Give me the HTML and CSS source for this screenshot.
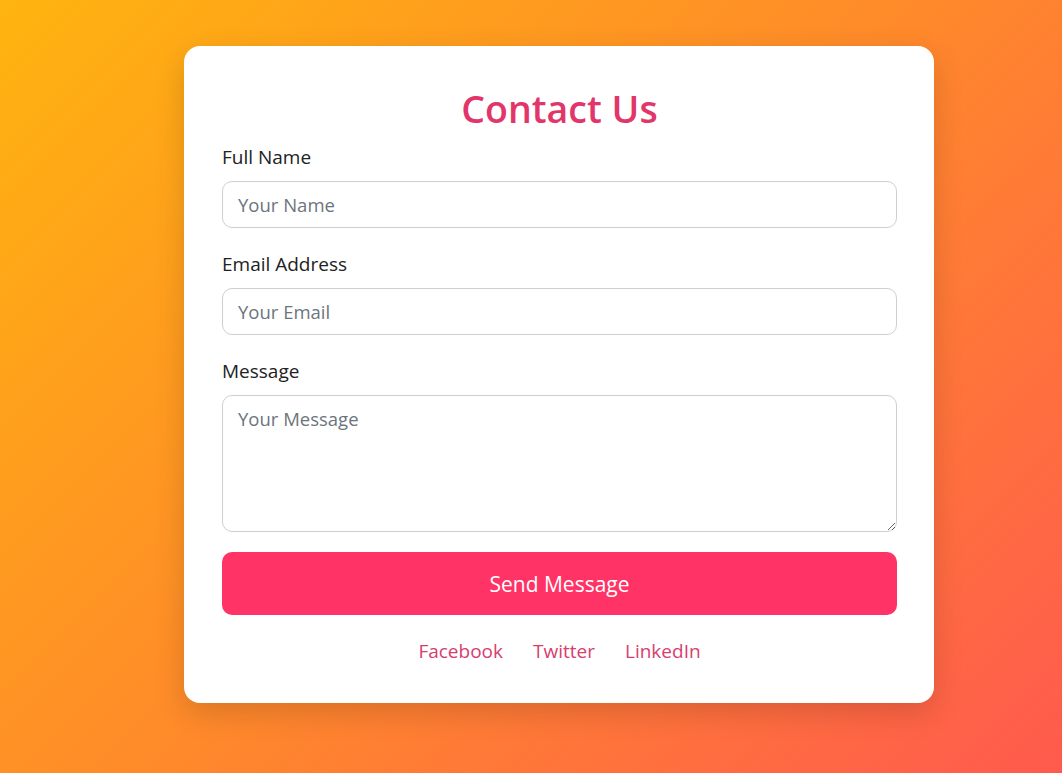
FILE: index.html
```html
<!DOCTYPE html>
<html lang="en">
<head>
<meta charset="utf-8">
<title>Contact Us</title>
<link rel="stylesheet" href="styles.css">
</head>
<body>
<main class="page">
  <section class="card">
    <h1 class="title">Contact Us</h1>
    <form class="form">
      <div class="field">
        <label class="label" for="name">Full Name</label>
        <input class="input" id="name" type="text" placeholder="Your Name">
      </div>
      <div class="field">
        <label class="label" for="email">Email Address</label>
        <input class="input" id="email" type="email" placeholder="Your Email">
      </div>
      <div class="field field-last">
        <label class="label" for="msg">Message</label>
        <textarea class="input textarea" id="msg" placeholder="Your Message"></textarea>
      </div>
      <button class="button" type="button">Send Message</button>
    </form>
    <nav class="social">
      <a class="social-link" href="#">Facebook</a>
      <a class="social-link" href="#">Twitter</a>
      <a class="social-link" href="#">LinkedIn</a>
    </nav>
  </section>
</main>
</body>
</html>
```
FILE: styles.css
```css
* { box-sizing: border-box; }
html, body { margin: 0; padding: 0; }
body {
  min-height: 100vh;
  background: linear-gradient(135deg, #ffb40f 0%, #ff8a2a 50%, #ff5a4e 100%);
  font-family: "Open Sans", "Noto Sans", sans-serif;
  color: #212529;
}
.page {
  display: flex;
  justify-content: center;
  padding-top: 46px;
  padding-left: 56px;
  min-height: 773px;
}
.card {
  width: 750px;
  height: 657px;
  background: #fff;
  border-radius: 16px;
  box-shadow: 0 10px 30px rgba(0,0,0,0.15);
  padding: 40px 37px 38px 38px;
}
.title {
  margin: 0;
  text-align: center;
  font-size: 37.5px;
  line-height: 45px;
  font-weight: 600;
  color: #e2366a;
}
.form { margin-top: 13px; }
.field { margin-bottom: 23px; }
.field-last { margin-bottom: 20px; }
.label {
  display: block;
  font-size: 19px;
  line-height: 27px;
  margin-bottom: 10px;
  color: #222;
}
.input {
  display: block;
  width: 100%;
  font-family: inherit;
  font-size: 18.5px;
  line-height: 27px;
  padding: 9px 15px;
  border: 1px solid #cfcfd2;
  border-radius: 10px;
  color: #222;
  background: #fff;
  outline: none;
}
.input::placeholder { color: #6c757d; }
.textarea {
  height: 137px;
  resize: vertical;
}
.button {
  display: block;
  width: 100%;
  height: 63px;
  border: none;
  border-radius: 10px;
  background: #ff3366;
  color: #fff;
  font-family: inherit;
  font-size: 21px;
  cursor: pointer;
}
.social {
  display: flex;
  justify-content: center;
  gap: 30px;
  margin-top: 23px;
}
.social-link {
  font-size: 19px;
  line-height: 27px;
  color: #d83d6e;
  text-decoration: none;
}
```
